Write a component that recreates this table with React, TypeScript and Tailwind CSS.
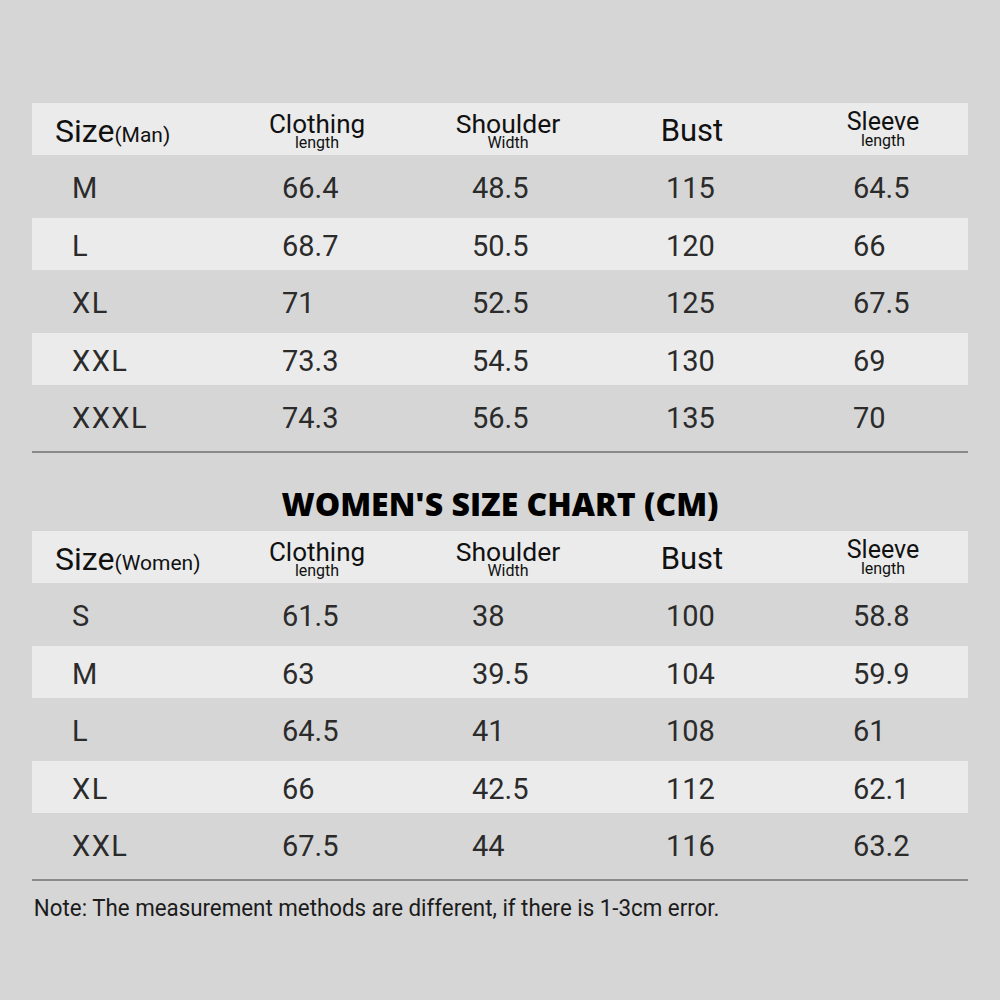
import React from "react";

type Row = [string, string, string, string, string];

const menRows: Row[] = [
  ["M", "66.4", "48.5", "115", "64.5"],
  ["L", "68.7", "50.5", "120", "66"],
  ["XL", "71", "52.5", "125", "67.5"],
  ["XXL", "73.3", "54.5", "130", "69"],
  ["XXXL", "74.3", "56.5", "135", "70"],
];

const womenRows: Row[] = [
  ["S", "61.5", "38", "100", "58.8"],
  ["M", "63", "39.5", "104", "59.9"],
  ["L", "64.5", "41", "108", "61"],
  ["XL", "66", "42.5", "112", "62.1"],
  ["XXL", "67.5", "44", "116", "63.2"],
];

function TwoLine({ top, bottom, size }: { top: string; bottom: string; size: string }) {
  return (
    <div className="flex flex-col items-center">
      <span className={`${size} leading-[22px]`}>{top}</span>
      <span className="text-[16px] leading-[15px]">{bottom}</span>
    </div>
  );
}

function HeaderRow({ who }: { who: string }) {
  return (
    <div className="flex h-[52px] items-center bg-[#ebebeb] text-[#111]">
      <div className="w-[200px] shrink-0 pl-[23px] pt-[3px]">
        <span className="text-[32px]">Size</span>
        <span className="text-[21px]">({who})</span>
      </div>
      <div className="w-[170px] shrink-0 pt-[4px]">
        <TwoLine top="Clothing" bottom="length" size="text-[26px]" />
      </div>
      <div className="w-[212px] shrink-0 pt-[4px]">
        <TwoLine top="Shoulder" bottom="Width" size="text-[26.5px]" />
      </div>
      <div className="w-[156px] shrink-0 text-center text-[31px] pt-[5px]">Bust</div>
      <div className="ml-[28px] w-[170px] shrink-0">
        <TwoLine top="Sleeve" bottom="length" size="text-[25px]" />
      </div>
    </div>
  );
}

function DataRow({ row, light }: { row: Row; light: boolean }) {
  return (
    <div
      className={`flex items-center pt-[5px] text-[29px] text-[#2b2b2b] ${
        light ? "h-[52px] bg-[#ebebeb]" : "h-[63px]"
      }`}
    >
      <div className="w-[250px] pl-[40px] tracking-[1.5px]">{row[0]}</div>
      <div className="w-[190px]">{row[1]}</div>
      <div className="w-[194px]">{row[2]}</div>
      <div className="w-[187px]">{row[3]}</div>
      <div>{row[4]}</div>
    </div>
  );
}

function Table({ who, rows }: { who: string; rows: Row[] }) {
  return (
    <div className="w-[936px]">
      <HeaderRow who={who} />
      {rows.map((r, i) => (
        <DataRow key={r[0]} row={r} light={i % 2 === 1} />
      ))}
      <div className="mt-[3px] h-[2px] bg-[#8a8a8a]" />
    </div>
  );
}

export default function App() {
  return (
    <div
      className="w-[1000px] h-[1000px] bg-[#d6d6d6] pt-[103px] pl-[32px]"
      style={{ fontFamily: "Roboto, 'Liberation Sans', sans-serif" }}
    >
      <Table who="Man" rows={menRows} />
      <h2 className="w-[936px] mt-[31px] mb-[7px] h-[40px] text-center text-[32px] leading-[40px] font-extrabold text-black font-['Open_Sans',sans-serif]">
        WOMEN'S SIZE CHART (CM)
      </h2>
      <Table who="Women" rows={womenRows} />
      <p className="mt-[12px] pl-[2px] w-[1000px] text-[24px] leading-[30px] text-[#1c1c1c] origin-left scale-x-[0.93]">
        Note: The measurement methods are different, if there is 1-3cm error.
      </p>
    </div>
  );
}
